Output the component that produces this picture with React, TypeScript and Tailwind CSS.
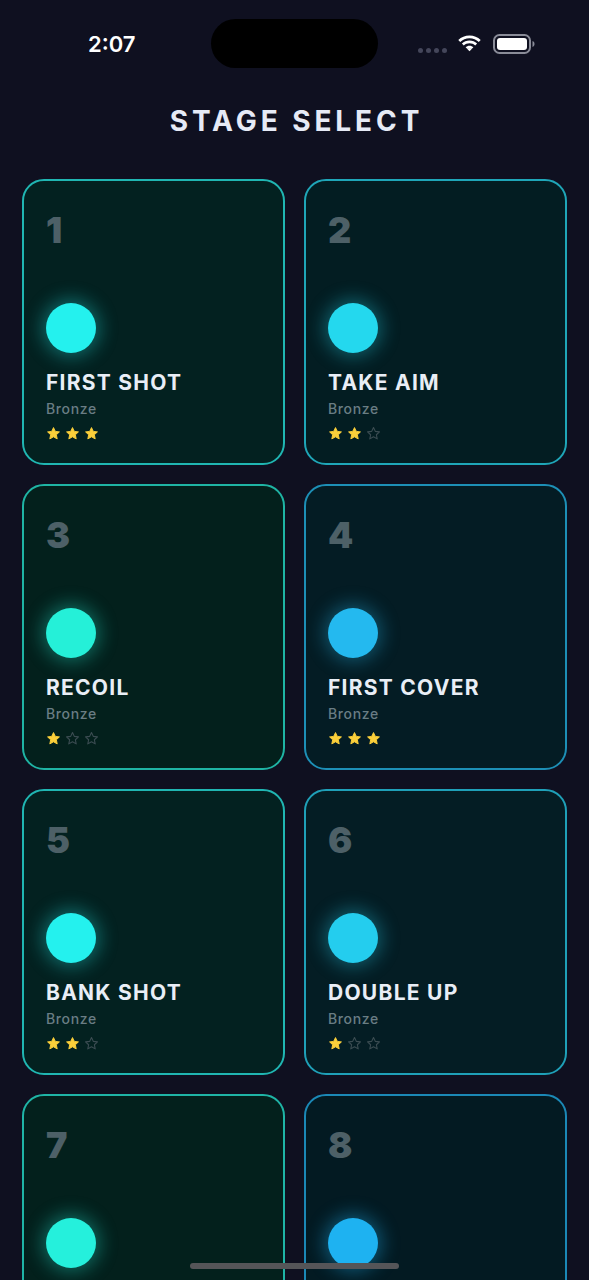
import React from "react";

type Stage = {
  n: number;
  name: string;
  stars: number;
  circle: string;
  border: string;
  bg: string;
  glow: string;
};

const stages: Stage[] = [
  { n: 1, name: "FIRST SHOT", stars: 3, circle: "bg-[#24f1ee]", border: "border-[#20b6b2]", bg: "bg-[#032120]", glow: "shadow-[0_0_18px_4px_rgba(36,241,238,0.35)]" },
  { n: 2, name: "TAKE AIM", stars: 2, circle: "bg-[#24d8ee]", border: "border-[#1fa6b8]", bg: "bg-[#031d22]", glow: "shadow-[0_0_18px_4px_rgba(36,216,238,0.35)]" },
  { n: 3, name: "RECOIL", stars: 1, circle: "bg-[#25f0d8]", border: "border-[#1fb4a4]", bg: "bg-[#03201c]", glow: "shadow-[0_0_18px_4px_rgba(37,240,216,0.35)]" },
  { n: 4, name: "FIRST COVER", stars: 3, circle: "bg-[#24b9ef]", border: "border-[#1d8fb6]", bg: "bg-[#041c24]", glow: "shadow-[0_0_18px_4px_rgba(36,185,239,0.35)]" },
  { n: 5, name: "BANK SHOT", stars: 2, circle: "bg-[#24f1ee]", border: "border-[#20b6b2]", bg: "bg-[#032120]", glow: "shadow-[0_0_18px_4px_rgba(36,241,238,0.35)]" },
  { n: 6, name: "DOUBLE UP", stars: 1, circle: "bg-[#24cdee]", border: "border-[#1fa0b8]", bg: "bg-[#041d24]", glow: "shadow-[0_0_18px_4px_rgba(36,205,238,0.35)]" },
  { n: 7, name: "", stars: 0, circle: "bg-[#25f0dc]", border: "border-[#1fb4a6]", bg: "bg-[#03201c]", glow: "shadow-[0_0_18px_4px_rgba(37,240,220,0.35)]" },
  { n: 8, name: "", stars: 0, circle: "bg-[#1eb2f1]", border: "border-[#1b88b6]", bg: "bg-[#031a22]", glow: "shadow-[0_0_18px_4px_rgba(30,178,241,0.4)]" },
];

const STAR = "M12 2.5l2.9 6.1 6.6.8-4.9 4.6 1.3 6.6L12 17.3l-5.9 3.3 1.3-6.6L2.5 9.4l6.6-.8z";

function Stars({ count }: { count: number }) {
  return (
    <div className="flex gap-[4px]">
      {[0, 1, 2].map((i) =>
        i < count ? (
          <svg key={i} width="15" height="15" viewBox="0 0 24 24">
            <path d={STAR} fill="#fbcf3a" stroke="#fbcf3a" strokeWidth="1.5" strokeLinejoin="round" />
          </svg>
        ) : (
          <svg key={i} width="15" height="15" viewBox="0 0 24 24">
            <path d={STAR} fill="none" stroke="#3b4c52" strokeWidth="1.8" strokeLinejoin="round" />
          </svg>
        )
      )}
    </div>
  );
}

function Card({ s }: { s: Stage }) {
  return (
    <div className={`h-[286px] rounded-[22px] border-2 ${s.border} ${s.bg} pl-[22px] pt-[31px] flex flex-col`}>
      <div className="h-[36px] text-[36px] leading-[36px] font-black text-[#4d6067]">{s.n}</div>
      <div className={`mt-[55px] w-[50px] h-[50px] rounded-full ${s.circle} ${s.glow}`} />
      {s.name && (
        <>
          <div className="mt-[19px] h-[21px] text-[21px] leading-[21px] font-bold tracking-[0.06em] text-[#e9eef6]">{s.name}</div>
          <div className="mt-[9px] h-[14px] text-[14px] leading-[14px] font-medium tracking-[0.045em] text-[#6a7d84]">Bronze</div>
          <div className="mt-[10px]">
            <Stars count={s.stars} />
          </div>
        </>
      )}
    </div>
  );
}

export default function App() {
  return (
    <div
      className="relative w-[589px] h-[1280px] overflow-hidden bg-[#0f1020]"
      style={{ fontFamily: "Inter, 'Noto Sans', sans-serif" }}
    >
      {/* status bar */}
      <div className="flex items-center pt-[19px] h-[68px]">
        <div className="w-[211px] pl-[88px] text-[22px] font-semibold text-white leading-none">2:07</div>
        <div className="w-[167px] h-[49px] rounded-full bg-black" />
        <div className="flex items-center pl-[40px]">
          <div className="flex gap-[3px] mt-[13px]">
            <div className="w-[5px] h-[5px] rounded-full bg-[#44465a]" />
            <div className="w-[5px] h-[5px] rounded-full bg-[#44465a]" />
            <div className="w-[5px] h-[5px] rounded-full bg-[#44465a]" />
            <div className="w-[5px] h-[5px] rounded-full bg-[#44465a]" />
          </div>
          <svg className="ml-[10px]" width="25" height="18" viewBox="0 0 25 18">
            <path d="M12.5 3.2c3.6 0 6.9 1.4 9.3 3.7l1.9-1.9C20.8 2.2 16.8.5 12.5.5S4.2 2.2 1.3 5l1.9 1.9c2.4-2.3 5.7-3.7 9.3-3.7z" fill="white" />
            <path d="M12.5 8.2c2.2 0 4.2.8 5.7 2.2l1.9-1.9c-2-1.9-4.7-3-7.6-3s-5.6 1.1-7.6 3l1.9 1.9c1.5-1.4 3.5-2.2 5.7-2.2z" fill="white" />
            <path d="M12.5 13c.9 0 1.7.3 2.2.9l-2.2 2.4-2.2-2.4c.5-.6 1.3-.9 2.2-.9z" fill="white" />
            <path d="M12.5 10.7c1.5 0 2.9.6 3.9 1.5l-1.8 1.9c-.5-.5-1.300-.8-2.1-.8s-1.6.3-2.1.8l-1.8-1.9c1-.9 2.4-1.5 3.9-1.5z" fill="white" />
          </svg>
          <svg className="ml-[11px]" width="42" height="20" viewBox="0 0 42 20">
            <rect x="1" y="1" width="36" height="18" rx="5.5" fill="none" stroke="#8a8c98" strokeWidth="2" />
            <rect x="4" y="4" width="30" height="12" rx="3" fill="white" />
            <path d="M39.5 7v6c1.3-.4 2-1.6 2-3s-.7-2.6-2-3z" fill="#8a8c98" />
          </svg>
        </div>
      </div>

      {/* title */}
      <div className="mt-[39px] h-[28px] text-center text-[28px] leading-[28px] font-bold tracking-[0.14em] text-[#e6eaf6] pl-[4px]">
        STAGE SELECT
      </div>

      {/* grid */}
      <div className="mt-[44px] px-[22px] grid grid-cols-2 gap-x-[19px] gap-y-[19px]">
        {stages.map((s) => (
          <Card key={s.n} s={s} />
        ))}
      </div>

      {/* home indicator */}
      <div className="absolute left-[190px] bottom-[11px] w-[209px] h-[6px] rounded-full bg-[#555558]" />
    </div>
  );
}
